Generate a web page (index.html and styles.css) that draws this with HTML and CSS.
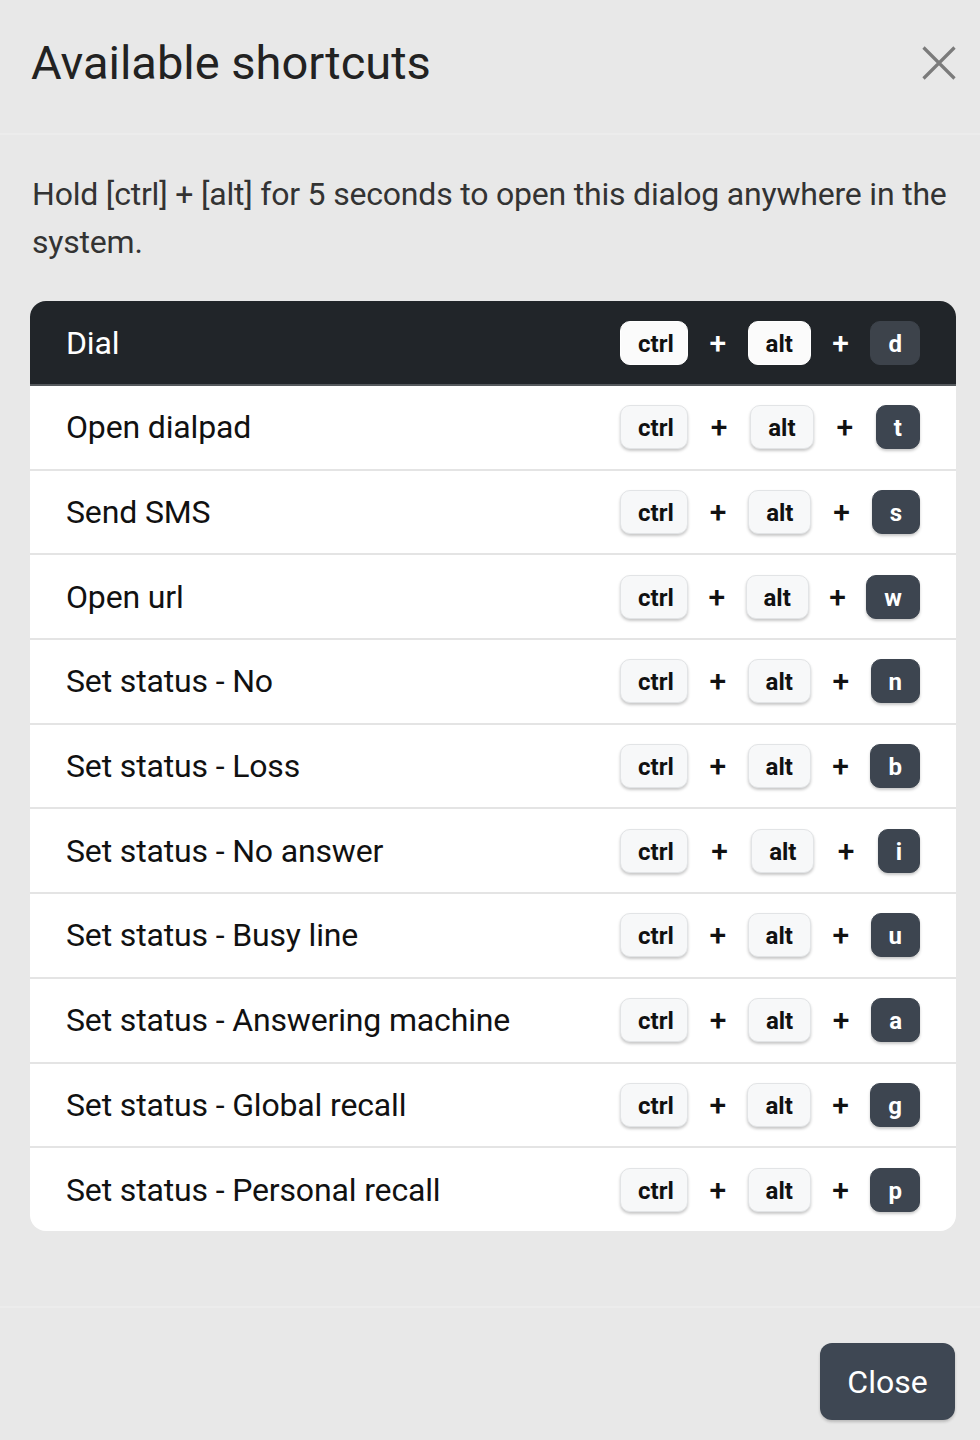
FILE: index.html
```html
<!DOCTYPE html>
<html lang="en">
<head>
<meta charset="utf-8">
<title>Available shortcuts</title>
<link rel="stylesheet" href="styles.css">
</head>
<body>
<div class="modal">
  <header class="modal-header">
    <h1 class="modal-title">Available shortcuts</h1>
    <button class="btn-x" type="button" aria-label="Close">
      <svg width="34" height="34" viewBox="0 0 34 34"><path d="M1.5 1.5L32.5 32.5M32.5 1.5L1.5 32.5" stroke="#7b7b7b" stroke-width="3.2" fill="none"/></svg>
    </button>
  </header>
  <div class="modal-body">
    <p class="intro">Hold [ctrl] + [alt] for 5 seconds to open this dialog anywhere in the system.</p>
    <table class="shortcuts">
      <thead>
        <tr>
          <th class="label">Dial</th>
          <th class="combo"><div class="keys"><kbd class="key">ctrl</kbd><span class="plus">+</span><kbd class="key">alt</kbd><span class="plus">+</span><kbd class="key key-dark">d</kbd></div></th>
        </tr>
      </thead>
      <tbody>
        <tr><td class="label">Open dialpad</td><td class="combo"><div class="keys"><kbd class="key">ctrl</kbd><span class="plus">+</span><kbd class="key">alt</kbd><span class="plus">+</span><kbd class="key key-dark">t</kbd></div></td></tr>
        <tr><td class="label">Send SMS</td><td class="combo"><div class="keys"><kbd class="key">ctrl</kbd><span class="plus">+</span><kbd class="key">alt</kbd><span class="plus">+</span><kbd class="key key-dark">s</kbd></div></td></tr>
        <tr><td class="label">Open url</td><td class="combo"><div class="keys"><kbd class="key">ctrl</kbd><span class="plus">+</span><kbd class="key">alt</kbd><span class="plus">+</span><kbd class="key key-dark">w</kbd></div></td></tr>
        <tr><td class="label">Set status - No</td><td class="combo"><div class="keys"><kbd class="key">ctrl</kbd><span class="plus">+</span><kbd class="key">alt</kbd><span class="plus">+</span><kbd class="key key-dark">n</kbd></div></td></tr>
        <tr><td class="label">Set status - Loss</td><td class="combo"><div class="keys"><kbd class="key">ctrl</kbd><span class="plus">+</span><kbd class="key">alt</kbd><span class="plus">+</span><kbd class="key key-dark">b</kbd></div></td></tr>
        <tr><td class="label">Set status - No answer</td><td class="combo"><div class="keys"><kbd class="key">ctrl</kbd><span class="plus">+</span><kbd class="key">alt</kbd><span class="plus">+</span><kbd class="key key-dark">i</kbd></div></td></tr>
        <tr><td class="label">Set status - Busy line</td><td class="combo"><div class="keys"><kbd class="key">ctrl</kbd><span class="plus">+</span><kbd class="key">alt</kbd><span class="plus">+</span><kbd class="key key-dark">u</kbd></div></td></tr>
        <tr><td class="label">Set status - Answering machine</td><td class="combo"><div class="keys"><kbd class="key">ctrl</kbd><span class="plus">+</span><kbd class="key">alt</kbd><span class="plus">+</span><kbd class="key key-dark">a</kbd></div></td></tr>
        <tr><td class="label">Set status - Global recall</td><td class="combo"><div class="keys"><kbd class="key">ctrl</kbd><span class="plus">+</span><kbd class="key">alt</kbd><span class="plus">+</span><kbd class="key key-dark">g</kbd></div></td></tr>
        <tr><td class="label">Set status - Personal recall</td><td class="combo"><div class="keys"><kbd class="key">ctrl</kbd><span class="plus">+</span><kbd class="key">alt</kbd><span class="plus">+</span><kbd class="key key-dark">p</kbd></div></td></tr>
      </tbody>
    </table>
  </div>
  <footer class="modal-footer">
    <button class="btn-close" type="button">Close</button>
  </footer>
</div>
</body>
</html>
```
FILE: styles.css
```css
* {
  box-sizing: border-box;
}

html, body {
  margin: 0;
  padding: 0;
}

body {
  background: #e8e8e8;
  font-family: Roboto, "Liberation Sans", Arial, sans-serif;
  color: #212529;
}

.modal {
  width: 980px;
  min-height: 1440px;
  display: flex;
  flex-direction: column;
  background: #e8e8e8;
}

/* header */
.modal-header {
  height: 135px;
  display: flex;
  align-items: center;
  justify-content: space-between;
  padding: 0 24px 8px 31px;
  border-bottom: 2px solid #ececec;
}

.modal-title {
  margin: 0;
  font-size: 47px;
  font-weight: 400;
  color: #222;
}

.btn-x {
  border: 0;
  background: none;
  padding: 0;
  margin: 0;
  width: 34px;
  height: 34px;
  display: flex;
  cursor: pointer;
}

/* body */
.modal-body {
  padding: 35px 24px 0 30px;
  height: 1171px;
}

.intro {
  margin: 0 0 35px 2px;
  font-size: 32px;
  line-height: 48px;
  letter-spacing: -0.2px;
  color: #333;
}

.shortcuts {
  width: 100%;
  border-collapse: separate;
  border-spacing: 0;
  border-radius: 16px;
  overflow: hidden;
  background: #fff;
}

.shortcuts th,
.shortcuts td {
  padding: 0 36px;
  font-weight: 400;
  text-align: left;
  vertical-align: middle;
}

.shortcuts thead th {
  background: #212529;
  color: #fff;
  height: 85px;
  border-bottom: 2px solid #55595d;
}

.shortcuts tbody td {
  height: 84.7px;
  border-top: 2px solid #e4e4e4;
}

.shortcuts tbody tr:first-child td {
  border-top: 0;
  height: 82.7px;
}

.label {
  font-size: 32px;
  letter-spacing: -0.15px;
  color: #111;
}

.shortcuts thead .label {
  color: #fff;
}

.combo {
  width: 372px;
  white-space: nowrap;
}

/* fixed-width key strip; leftover space is shared between the gaps */
.keys {
  width: 300px;
  display: flex;
  align-items: center;
  justify-content: space-between;
}

.key {
  font-family: Roboto, "Liberation Sans", Arial, sans-serif;
  font-size: 24px;
  font-weight: 700;
  line-height: 28px;
  height: 44px;
  min-width: 42px;
  padding: 8px 17px;
  border-radius: 10px;
  background: #f7f8f9;
  color: #111;
  border: 1px solid #e2e4e6;
  box-shadow: 0 2px 3px rgba(0, 0, 0, 0.22);
  text-align: center;
}

.key:first-child {
  width: 68px;
}

.key-dark {
  background: #3d4550;
  color: #fff;
  border-color: #3d4550;
}

.shortcuts thead .key {
  box-shadow: none;
  border-color: #fff;
  background: #fbfbfb;
}

.shortcuts thead .key-dark {
  background: #3d434b;
  border-color: #3d434b;
  color: #fff;
}

.plus {
  font-size: 30px;
  font-weight: 500;
  line-height: 1;
  color: #111;
}

.shortcuts thead .plus {
  color: #fff;
}

/* footer */
.modal-footer {
  flex: 1;
  border-top: 2px solid #ececec;
  display: flex;
  justify-content: flex-end;
  align-items: flex-start;
  padding: 35px 25px 0 0;
}

.btn-close {
  width: 135px;
  height: 77px;
  border: 0;
  border-radius: 12px;
  background: #3e4753;
  color: #fff;
  font-family: Roboto, "Liberation Sans", Arial, sans-serif;
  font-size: 32px;
  box-shadow: 0 2px 3px rgba(0, 0, 0, 0.2);
  cursor: pointer;
}
```
